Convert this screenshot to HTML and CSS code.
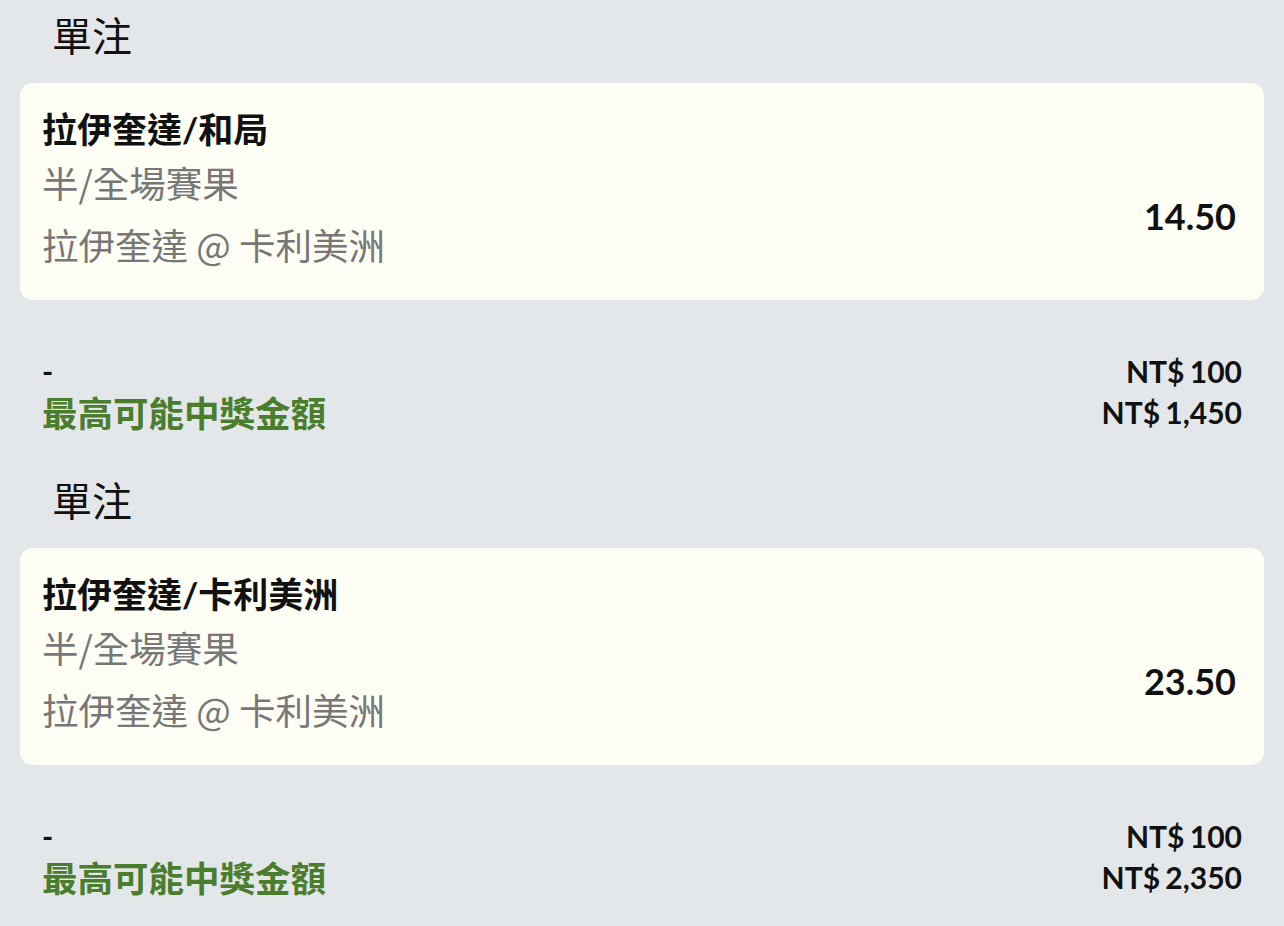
FILE: index.html
```html
<!DOCTYPE html>
<html lang="zh-Hant">
<head>
    <meta charset="UTF-8">
    <meta name="viewport" content="width=device-width, initial-scale=1.0">
    <title>投注單</title>
    <link rel="stylesheet" href="styles.css">
</head>
<body>
    <div class="bet">
        <div class="bet-type">單注</div>
        <div class="bet-card">
            <div class="selection">拉伊奎達/和局</div>
            <div class="bet-detail">
                <div class="bet-info">
                    <div class="market">半/全場賽果</div>
                    <div class="match">拉伊奎達 @ 卡利美洲</div>
                </div>
                <div class="odds">14.50</div>
            </div>
        </div>
        <div class="summary">
            <div class="summary-row">
                <span class="stake-label">-</span>
                <span class="amount">NT$ 100</span>
            </div>
            <div class="summary-row">
                <span class="payout-label">最高可能中獎金額</span>
                <span class="amount">NT$ 1,450</span>
            </div>
        </div>
    </div>

    <div class="bet">
        <div class="bet-type">單注</div>
        <div class="bet-card">
            <div class="selection">拉伊奎達/卡利美洲</div>
            <div class="bet-detail">
                <div class="bet-info">
                    <div class="market">半/全場賽果</div>
                    <div class="match">拉伊奎達 @ 卡利美洲</div>
                </div>
                <div class="odds">23.50</div>
            </div>
        </div>
        <div class="summary">
            <div class="summary-row">
                <span class="stake-label">-</span>
                <span class="amount">NT$ 100</span>
            </div>
            <div class="summary-row">
                <span class="payout-label">最高可能中獎金額</span>
                <span class="amount">NT$ 2,350</span>
            </div>
        </div>
    </div>
</body>
</html>
```

FILE: styles.css
```css
* {
    margin: 0;
    padding: 0;
    box-sizing: border-box;
}

body {
    font-family: Lato, 'Noto Sans CJK TC', sans-serif;
    background-color: #e3e7e9;
    color: #111;
}

.bet {
    padding: 0 20px;
    height: 465px;
}

.bet-type {
    font-family: 'Noto Sans CJK TC', sans-serif;
    font-size: 40px;
    line-height: 46px;
    padding: 11px 0 0 32px;
    margin-bottom: 26px;
    color: #111;
}

.bet-card {
    background-color: #fefef5;
    border-radius: 13px;
    height: 217px;
    padding: 24px 28px 0 22px;
}

.selection {
    font-size: 35px;
    font-weight: 700;
    line-height: 44px;
}

.bet-detail {
    display: flex;
    justify-content: space-between;
    align-items: center;
    margin-top: 10px;
}

.market,
.match {
    font-family: 'Noto Sans CJK TC', sans-serif;
    font-size: 36.5px;
    line-height: 44px;
    color: #777;
}

.match {
    margin-top: 18px;
}

.odds {
    font-size: 36px;
    font-weight: 700;
    color: #111;
    padding-top: 4px;
}

.summary {
    padding: 50px 22px 0;
}

.summary-row {
    display: flex;
    justify-content: space-between;
    align-items: center;
    height: 41px;
}

.stake-label {
    font-size: 30px;
    font-weight: 700;
}

.payout-label {
    font-size: 35.5px;
    font-weight: 700;
    color: #4a7d2c;
}

.amount {
    font-size: 30px;
    font-weight: 700;
    word-spacing: -2px;
}
```
